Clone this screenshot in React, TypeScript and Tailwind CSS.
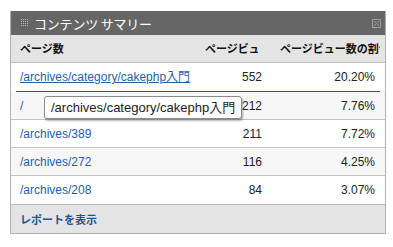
import React from "react";

const rows = [
  { path: "/archives/category/cakephp入門", pv: "552", pct: "20.20%" },
  { path: "/", pv: "212", pct: "7.76%" },
  { path: "/archives/389", pv: "211", pct: "7.72%" },
  { path: "/archives/272", pv: "116", pct: "4.25%" },
  { path: "/archives/208", pv: "84", pct: "3.07%" },
];

const jp = { fontFamily: '"Noto Sans CJK JP", "Liberation Sans", sans-serif' };
const lat = { fontFamily: '"Liberation Sans", Arial, "Noto Sans CJK JP", sans-serif' };

export default function App() {
  return (
    <div className="w-[393px] h-[247px] bg-white pt-[11px] pl-[10px]">
      <div className="relative w-[376px] border-x border-b border-[#b0b0b0]">
        {/* title bar */}
        <div className="h-[24px] bg-[#666666] flex items-center pl-[10px] pr-[4px]">
          <svg width="8" height="8" viewBox="0 0 8 8" className="mr-[5px]">
            {[0, 2, 4, 6].map((y) =>
              [0, 2, 4, 6].map((x) => (
                <rect key={`${x}-${y}`} x={x} y={y} width="1" height="1" fill="#b8b8b8" />
              ))
            )}
          </svg>
          <span className="text-white text-[13px] leading-none tracking-[-0.2px]" style={jp}>
            コンテンツ サマリー
          </span>
          <div className="flex-1" />
          <svg width="9" height="9" viewBox="0 0 9 9">
            <rect x="0.5" y="0.5" width="8" height="8" fill="none" stroke="#9a9a9a" />
            <path d="M2 2 L7 7 M7 2 L2 7" stroke="#9a9a9a" strokeWidth="1" />
          </svg>
        </div>
        {/* column headers */}
        <div className="h-[28px] bg-[#e4e4e4] border-b border-[#bcbcbc] flex items-center text-[11px] font-bold text-[#111]" style={jp}>
          <div className="flex-1 pl-[9px]">ページ数</div>
          <div className="w-[68px] pl-[6px] pr-[9px]">
            <div className="overflow-hidden whitespace-nowrap">ページビュー</div>
          </div>
          <div className="w-[118px] pl-[13px] pr-[5px]">
            <div className="overflow-hidden whitespace-nowrap">ページビュー数の割合</div>
          </div>
        </div>
        {/* rows */}
        {rows.map((r, i) => (
          <div key={i}>
            <div
              className={`h-[28px] flex items-center text-[12px] ${i % 2 === 1 ? "bg-[#f7f7f7]" : "bg-white"} ${
                i === 0 ? "" : i < rows.length - 1 ? "border-b border-[#c4c4c4]" : ""
              }`}
              style={lat}
            >
              <div className={`flex-1 pl-[9px] text-[#1f5ea8] ${i === 0 ? "underline" : ""}`}>{r.path}</div>
              <div className="w-[68px] text-right pr-[5px] text-[#222]">{r.pv}</div>
              <div className="w-[118px] text-right pr-[10px] text-[#222]">{r.pct}</div>
            </div>
            {i === 0 && <div className="h-px bg-[#e01010] ml-[5px] mr-[5px]" />}
          </div>
        ))}
        {/* footer */}
        <div className="h-[29px] bg-[#e4e4e4] border-t border-[#bcbcbc] flex items-center pl-[9px]">
          <span className="text-[11px] font-bold text-[#1a5690]" style={jp}>
            レポートを表示
          </span>
        </div>
        {/* tooltip */}
        <div
          className="absolute left-[33px] top-[85px] h-[23px] px-[6px] flex items-center bg-white border border-[#8a8a8a] rounded-[3px] shadow-[1px_2px_2px_rgba(0,0,0,0.3)] text-[13px] text-[#222] whitespace-nowrap"
          style={lat}
        >
          /archives/category/cakephp入門
        </div>
      </div>
    </div>
  );
}
